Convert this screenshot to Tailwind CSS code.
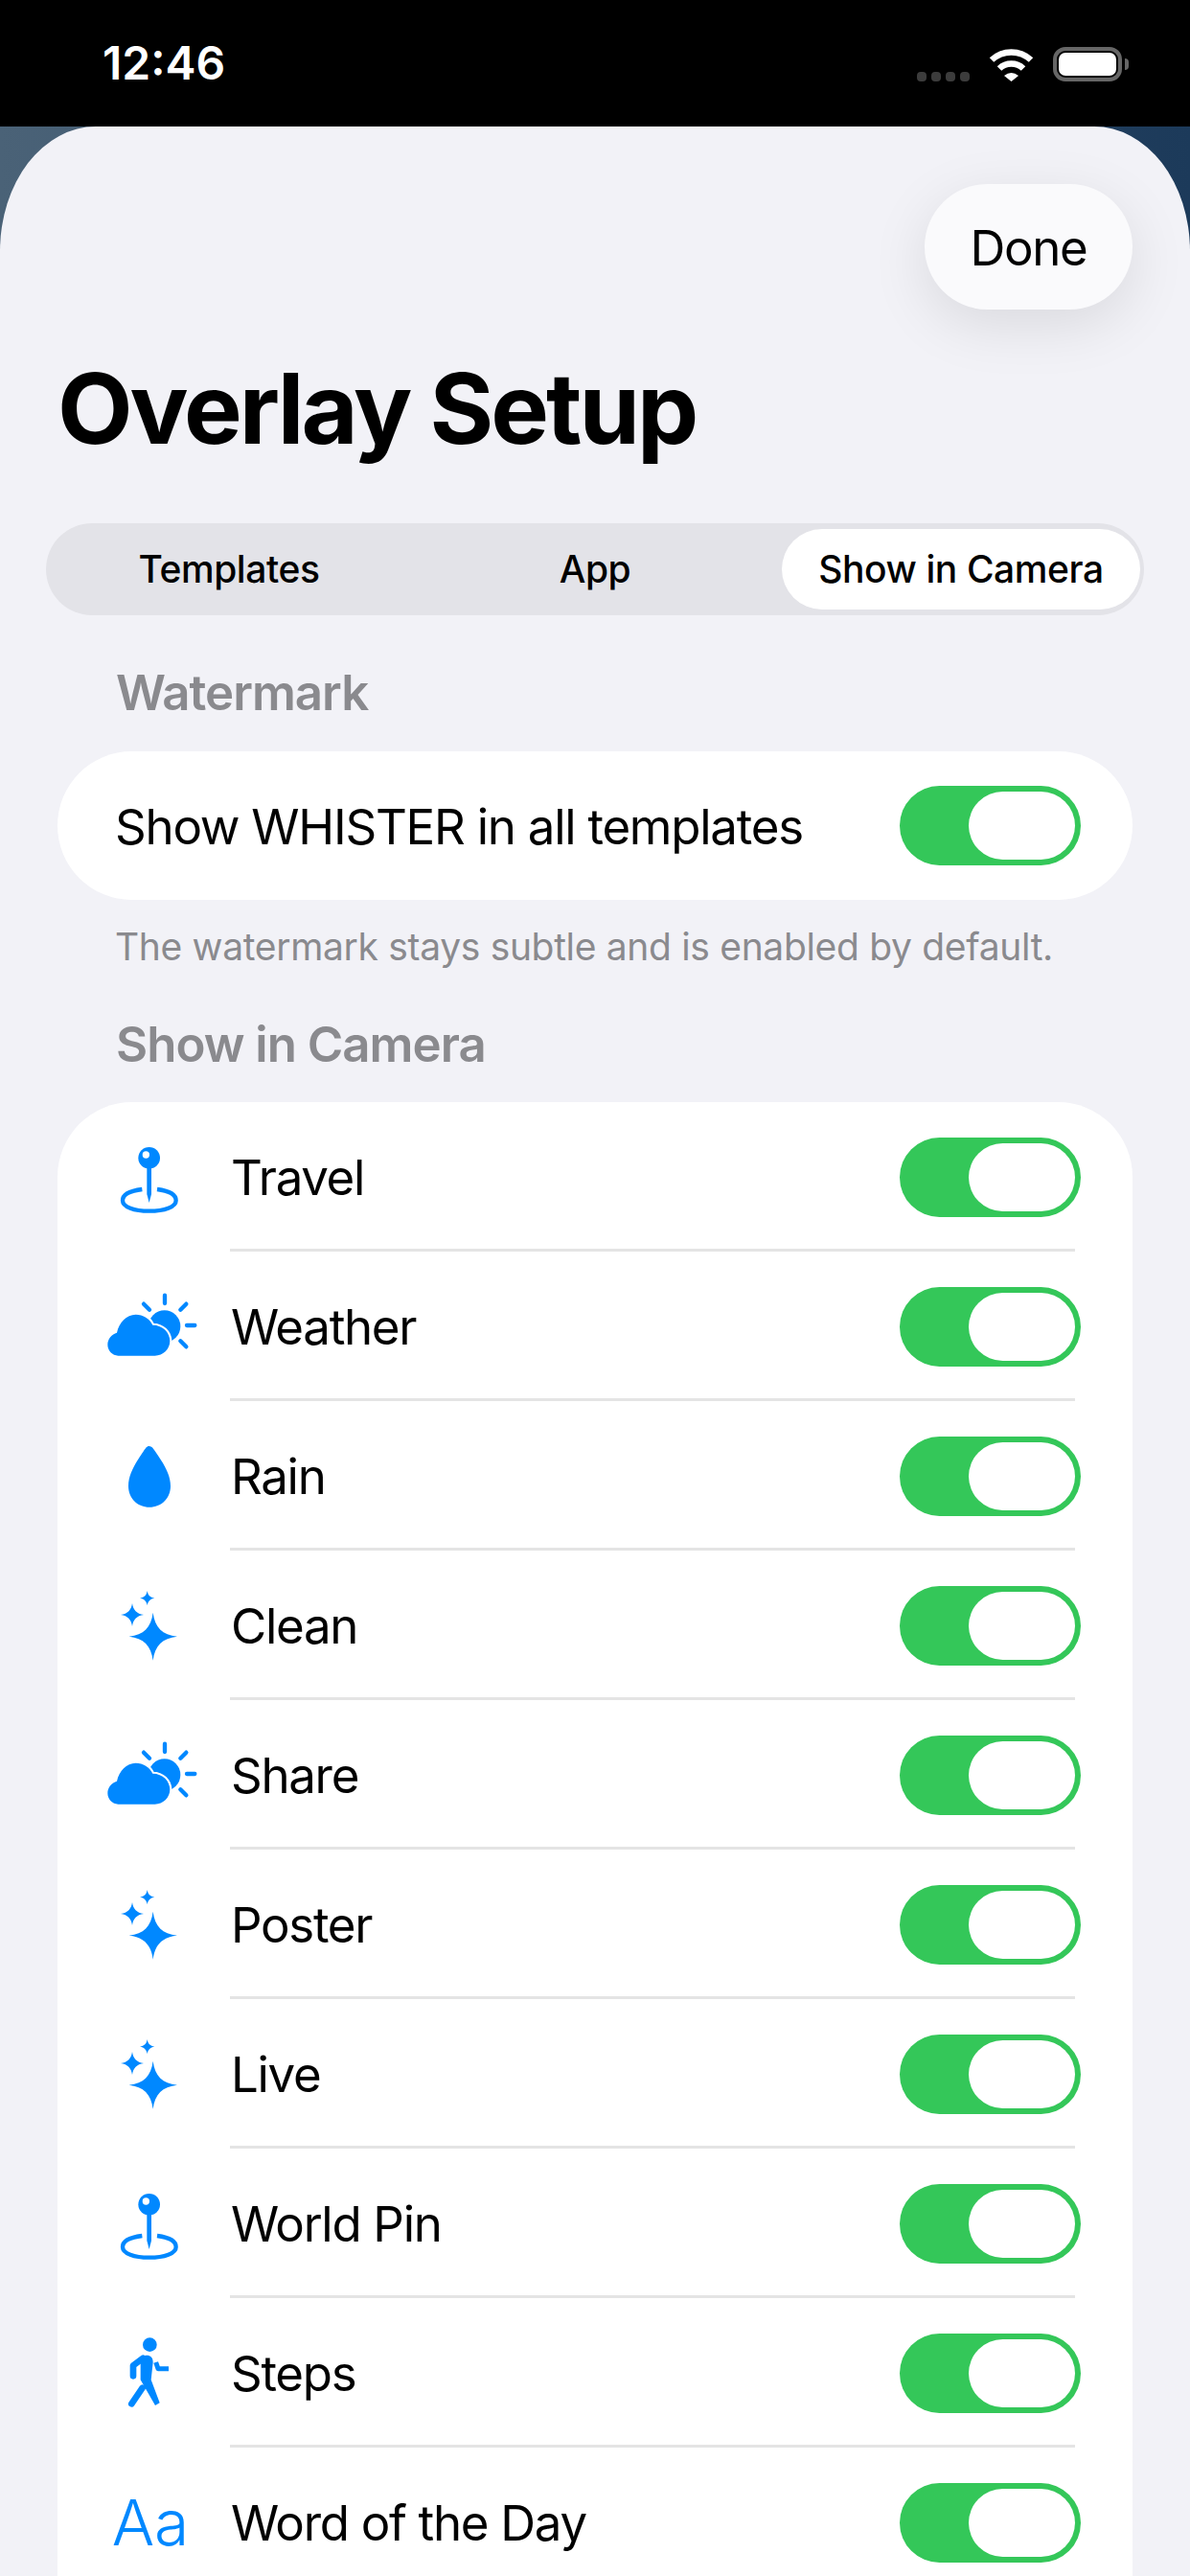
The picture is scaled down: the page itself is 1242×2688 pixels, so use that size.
<!DOCTYPE html>
<html lang="en">
<head>
  <meta charset="UTF-8" />
  <meta name="viewport" content="width=device-width, initial-scale=1" />
  <title>Overlay Setup</title>
  <script src="https://cdn.jsdelivr.net/npm/@tailwindcss/browser@4"></script>
</head>
<body class="bg-black">
  <div class="w-[1242px] h-[2688px] overflow-hidden flex flex-col bg-gradient-to-r from-[#4a6277] to-[#1c3a5a] font-[Inter,sans-serif] text-black">
    <!-- Status bar -->
    <div class="h-[132px] shrink-0 bg-black flex items-start justify-between pl-[107px] pr-[64px] pt-[37px] text-white">
      <span class="text-[48px] leading-[58px] font-semibold">12:46</span>
      <div class="flex items-start pt-[12px]">
        <div class="flex gap-[5px] mt-[26px]">
          <span class="w-[10px] h-[10px] rounded-[4px] bg-[#3c3c3c]"></span>
          <span class="w-[10px] h-[10px] rounded-[4px] bg-[#3c3c3c]"></span>
          <span class="w-[10px] h-[10px] rounded-[4px] bg-[#3c3c3c]"></span>
          <span class="w-[10px] h-[10px] rounded-[4px] bg-[#3c3c3c]"></span>
        </div>
        <svg class="ml-[20px]" width="47" height="36" viewBox="0 0 47 36" fill="none">
          <path d="M3 13.5A30 30 0 0 1 44 13.5" stroke="white" stroke-width="6.5" />
          <path d="M11 22.5A18 18 0 0 1 36 22.5" stroke="white" stroke-width="6.5" />
          <path d="M16 30Q23.5 24 31 30L23.5 36Z" fill="white" />
        </svg>
        <div class="ml-[20px] w-[72px] h-[36px] rounded-[13px] border-[4px] border-[#666] p-[2px]">
          <div class="w-full h-full rounded-[7px] bg-white"></div>
        </div>
        <div class="ml-[3px] mt-[12px] w-[4px] h-[12px] rounded-r-[4px] bg-[#666]"></div>
      </div>
    </div>

    <!-- Sheet -->
    <div class="flex-1 bg-[#f2f2f7] rounded-tl-[100px_130px] rounded-tr-[100px_130px] px-[60px] pt-[60px]">
      <div class="flex justify-end">
        <button class="w-[217px] h-[131px] pt-[4px] rounded-full bg-[#fafafc] text-[51px] tracking-[-1.3px] shadow-[0_16px_60px_rgba(0,0,0,0.1)]">Done</button>
      </div>
      <h1 class="mt-[43px] text-[102px] leading-[120px] font-bold tracking-[-3px]">Overlay Setup</h1>

      <!-- Segmented control -->
      <div class="mt-[60px] -mx-[12px] w-[1146px] h-[96px] rounded-full bg-[#e3e3e8] grid grid-cols-3 items-center text-[39px] font-medium tracking-[-0.4px] text-center">
        <div>Templates</div>
        <div>App</div>
        <div class="mx-[4px] h-[84px] rounded-full bg-white flex items-center justify-center">Show in Camera</div>
      </div>

      <h2 class="mt-[52px] ml-[61px] text-[51px] leading-[58px] font-semibold tracking-[-1px] text-[#8a8a8e]">Watermark</h2>
      <div class="mt-[32px] h-[155px] rounded-full bg-white flex items-center justify-between pl-[60px] pr-[54px]">
        <span class="pt-[3px] text-[51px] tracking-[-1.25px]">Show WHISTER in all templates</span>
        <div class="w-[189px] h-[83px] rounded-full bg-[#34c759] flex items-center justify-end pr-[6px]"><div class="w-[111px] h-[71px] rounded-full bg-white"></div></div>
      </div>
      <p class="mt-[26px] ml-[60px] text-[39px] leading-[46px] tracking-[-0.33px] text-[#8a8a8e]">The watermark stays subtle and is enabled by default.</p>

      <h2 class="mt-[50px] ml-[61px] text-[51px] leading-[58px] font-semibold tracking-[-1px] text-[#8a8a8e]">Show in Camera</h2>

      <!-- Overlay list -->
      <div class="mt-[31px] rounded-t-[78px] bg-white">
        <div class="h-[153px] pt-[3px] flex items-center pl-[46px] pr-[54px]">
          <svg class="shrink-0" width="100" height="80" viewBox="48 84 300 240" fill="#0088ff"><circle cx="197" cy="145" r="34"/><circle cx="187" cy="135" r="11" fill="white"/><path d="M190 175H204V258L197 285L190 258Z"/><path d="M175 243C135 248 114 260 114 278C114 298 150 311 197 311C245 311 281 298 281 278C281 260 260 248 222 243" fill="none" stroke="#0088ff" stroke-width="13"/></svg>
          <span class="ml-[35px] pt-[3px] flex-1 text-[51px] tracking-[-1.3px]">Travel</span>
          <div class="w-[189px] h-[83px] rounded-full bg-[#34c759] flex items-center justify-end pr-[6px]"><div class="w-[111px] h-[71px] rounded-full bg-white"></div></div>
        </div>
        <div class="h-[3px] ml-[180px] mr-[60px] bg-[#e4e4e4]"></div>
        <div class="h-[153px] pt-[3px] flex items-center pl-[46px] pr-[54px]">
          <svg class="shrink-0" width="100" height="80" viewBox="48 72 300 240" fill="#0088ff"><circle cx="245" cy="192" r="50"/><path d="M100 284C82 284 67 268 67 250C67 231 80 216 96 212C103 180 126 155 155 155C178 155 198 167 208 188C240 188 262 212 262 238C262 264 240 284 215 284Z" stroke="white" stroke-width="12" paint-order="stroke"/><path d="M246 95V120M295 140L313 122M315 189H340M295 238L313 256M180 122L198 140" stroke="#0088ff" stroke-width="13" stroke-linecap="round"/></svg>
          <span class="ml-[35px] pt-[3px] flex-1 text-[51px] tracking-[-1.3px]">Weather</span>
          <div class="w-[189px] h-[83px] rounded-full bg-[#34c759] flex items-center justify-end pr-[6px]"><div class="w-[111px] h-[71px] rounded-full bg-white"></div></div>
        </div>
        <div class="h-[3px] ml-[180px] mr-[60px] bg-[#e4e4e4]"></div>
        <div class="h-[153px] pt-[3px] flex items-center pl-[46px] pr-[54px]">
          <svg class="shrink-0" width="100" height="80" viewBox="48 60 300 240" fill="#0088ff"><path d="M197 87C205 87 210 95 215 102C235 132 264 170 264 212C264 250 235 278 198 278C161 278 132 250 132 212C132 170 160 132 180 102C185 95 189 87 197 87Z"/></svg>
          <span class="ml-[35px] pt-[3px] flex-1 text-[51px] tracking-[-1.3px]">Rain</span>
          <div class="w-[189px] h-[83px] rounded-full bg-[#34c759] flex items-center justify-end pr-[6px]"><div class="w-[111px] h-[71px] rounded-full bg-white"></div></div>
        </div>
        <div class="h-[3px] ml-[180px] mr-[60px] bg-[#e4e4e4]"></div>
        <div class="h-[153px] pt-[3px] flex items-center pl-[46px] pr-[54px]">
          <svg class="shrink-0" width="100" height="80" viewBox="48 528 300 240" fill="#0088ff"><path d="M209 608C215 655 238 678 285 683C238 688 215 711 209 758C203 711 180 688 134 683C180 678 203 655 209 608Z"/><path d="M144 579C147 600 158 612 180 615C158 618 147 630 144 651C141 630 130 618 108 615C130 612 141 600 144 579Z"/><path d="M191 540C193 553 200 561 214 563C200 565 193 573 191 586C189 573 182 565 168 563C182 561 189 553 191 540Z"/></svg>
          <span class="ml-[35px] pt-[3px] flex-1 text-[51px] tracking-[-1.3px]">Clean</span>
          <div class="w-[189px] h-[83px] rounded-full bg-[#34c759] flex items-center justify-end pr-[6px]"><div class="w-[111px] h-[71px] rounded-full bg-white"></div></div>
        </div>
        <div class="h-[3px] ml-[180px] mr-[60px] bg-[#e4e4e4]"></div>
        <div class="h-[153px] pt-[3px] flex items-center pl-[46px] pr-[54px]">
          <svg class="shrink-0" width="100" height="80" viewBox="48 72 300 240" fill="#0088ff"><circle cx="245" cy="192" r="50"/><path d="M100 284C82 284 67 268 67 250C67 231 80 216 96 212C103 180 126 155 155 155C178 155 198 167 208 188C240 188 262 212 262 238C262 264 240 284 215 284Z" stroke="white" stroke-width="12" paint-order="stroke"/><path d="M246 95V120M295 140L313 122M315 189H340M295 238L313 256M180 122L198 140" stroke="#0088ff" stroke-width="13" stroke-linecap="round"/></svg>
          <span class="ml-[35px] pt-[3px] flex-1 text-[51px] tracking-[-1.3px]">Share</span>
          <div class="w-[189px] h-[83px] rounded-full bg-[#34c759] flex items-center justify-end pr-[6px]"><div class="w-[111px] h-[71px] rounded-full bg-white"></div></div>
        </div>
        <div class="h-[3px] ml-[180px] mr-[60px] bg-[#e4e4e4]"></div>
        <div class="h-[153px] pt-[3px] flex items-center pl-[46px] pr-[54px]">
          <svg class="shrink-0" width="100" height="80" viewBox="48 528 300 240" fill="#0088ff"><path d="M209 608C215 655 238 678 285 683C238 688 215 711 209 758C203 711 180 688 134 683C180 678 203 655 209 608Z"/><path d="M144 579C147 600 158 612 180 615C158 618 147 630 144 651C141 630 130 618 108 615C130 612 141 600 144 579Z"/><path d="M191 540C193 553 200 561 214 563C200 565 193 573 191 586C189 573 182 565 168 563C182 561 189 553 191 540Z"/></svg>
          <span class="ml-[35px] pt-[3px] flex-1 text-[51px] tracking-[-1.3px]">Poster</span>
          <div class="w-[189px] h-[83px] rounded-full bg-[#34c759] flex items-center justify-end pr-[6px]"><div class="w-[111px] h-[71px] rounded-full bg-white"></div></div>
        </div>
        <div class="h-[3px] ml-[180px] mr-[60px] bg-[#e4e4e4]"></div>
        <div class="h-[153px] pt-[3px] flex items-center pl-[46px] pr-[54px]">
          <svg class="shrink-0" width="100" height="80" viewBox="48 528 300 240" fill="#0088ff"><path d="M209 608C215 655 238 678 285 683C238 688 215 711 209 758C203 711 180 688 134 683C180 678 203 655 209 608Z"/><path d="M144 579C147 600 158 612 180 615C158 618 147 630 144 651C141 630 130 618 108 615C130 612 141 600 144 579Z"/><path d="M191 540C193 553 200 561 214 563C200 565 193 573 191 586C189 573 182 565 168 563C182 561 189 553 191 540Z"/></svg>
          <span class="ml-[35px] pt-[3px] flex-1 text-[51px] tracking-[-1.3px]">Live</span>
          <div class="w-[189px] h-[83px] rounded-full bg-[#34c759] flex items-center justify-end pr-[6px]"><div class="w-[111px] h-[71px] rounded-full bg-white"></div></div>
        </div>
        <div class="h-[3px] ml-[180px] mr-[60px] bg-[#e4e4e4]"></div>
        <div class="h-[153px] pt-[3px] flex items-center pl-[46px] pr-[54px]">
          <svg class="shrink-0" width="100" height="80" viewBox="48 84 300 240" fill="#0088ff"><circle cx="197" cy="145" r="34"/><circle cx="187" cy="135" r="11" fill="white"/><path d="M190 175H204V258L197 285L190 258Z"/><path d="M175 243C135 248 114 260 114 278C114 298 150 311 197 311C245 311 281 298 281 278C281 260 260 248 222 243" fill="none" stroke="#0088ff" stroke-width="13"/></svg>
          <span class="ml-[35px] pt-[3px] flex-1 text-[51px] tracking-[-1.3px]">World Pin</span>
          <div class="w-[189px] h-[83px] rounded-full bg-[#34c759] flex items-center justify-end pr-[6px]"><div class="w-[111px] h-[71px] rounded-full bg-white"></div></div>
        </div>
        <div class="h-[3px] ml-[180px] mr-[60px] bg-[#e4e4e4]"></div>
        <div class="h-[153px] pt-[3px] flex items-center pl-[46px] pr-[54px]">
          <svg class="shrink-0" width="100" height="80" viewBox="48 48 300 240" fill="#0088ff"><circle cx="199" cy="80" r="22"/><path d="M147 178V145L178 122" fill="none" stroke="#0088ff" stroke-width="20" stroke-linecap="round" stroke-linejoin="round"/><path d="M170 128C175 108 210 106 209 135L203 190L230 262L216 270L170 190Z"/><path d="M176 215L142 265" fill="none" stroke="#0088ff" stroke-width="20" stroke-linecap="round"/><path d="M218 135L225 155H258" fill="none" stroke="#0088ff" stroke-width="15" stroke-linejoin="round"/></svg>
          <span class="ml-[35px] pt-[3px] flex-1 text-[51px] tracking-[-1.3px]">Steps</span>
          <div class="w-[189px] h-[83px] rounded-full bg-[#34c759] flex items-center justify-end pr-[6px]"><div class="w-[111px] h-[71px] rounded-full bg-white"></div></div>
        </div>
        <div class="h-[3px] ml-[180px] mr-[60px] bg-[#e4e4e4]"></div>
        <div class="h-[153px] pt-[3px] flex items-center pl-[46px] pr-[54px]">
          <span class="w-[100px] pl-[2px] shrink-0 text-center text-[66px] font-light text-[#0088ff]">Aa</span>
          <span class="ml-[35px] pt-[3px] flex-1 text-[51px] tracking-[-1.3px]">Word of the Day</span>
          <div class="w-[189px] h-[83px] rounded-full bg-[#34c759] flex items-center justify-end pr-[6px]"><div class="w-[111px] h-[71px] rounded-full bg-white"></div></div>
        </div>
      </div>
    </div>
  </div>
</body>
</html>
